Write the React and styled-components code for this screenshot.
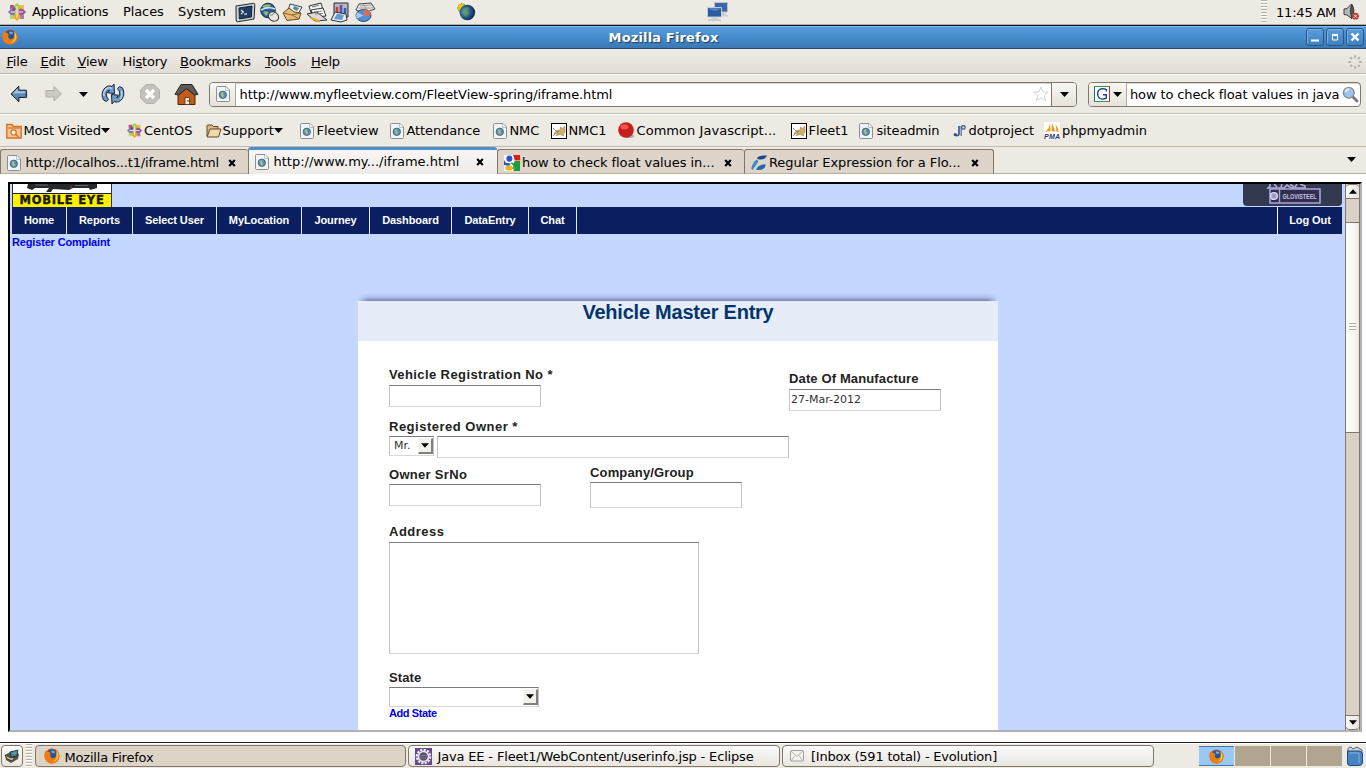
import React from "react";
import styled, { createGlobalStyle } from "styled-components";

const Global = createGlobalStyle`
  * { box-sizing: border-box; }
  body { margin: 0; background: #fff; overflow: hidden; }
`;

const Screen = styled.div`
  width: 1366px; height: 768px; display: flex; flex-direction: column;
  font: 13px/16px "DejaVu Sans", sans-serif; color: #000; background: #fff; overflow: hidden;
`;
const Space = styled.span`flex: none; width: ${p => p.$w}px;`;
const Grow = styled.span`flex: 1;`;
const Slot = styled.span`
  flex: none; width: ${p => p.$w}px; white-space: nowrap; display: block;
  letter-spacing: ${p => p.$ls || 0}px; padding-top: ${p => p.$top || 0}px;
  svg { display: block; }
`;
const TopPanel = styled.div`
  flex: none; height: 25px; display: flex; align-items: center; background: #edeae3;
  border-bottom: 1px solid #bcae96;
`;
const TitleBar = styled.div`
  flex: none; height: 24px; display: flex; align-items: center; padding: 0 2px 0 2px;
  background: linear-gradient(#5b9fe0, #4a90d0 40%, #3a78b4); border-top: 1px solid #0d1b2a; border-bottom: 1px solid #2b4d6d;
  box-shadow: inset 0 1px #7fb8ee;
`;
const TitleText = styled.div`
  flex: 1; text-align: center; color: #fff; font-weight: bold; text-shadow: 1px 1px 1px #1c3d5c;
  padding: 1px 0 0 4px; letter-spacing: .15px;
`;
const WinButton = styled.span`
  width: 18px; height: 18px; margin-left: 2px; border: 1px solid #2a5584; border-radius: 3px;
  background: linear-gradient(#5a9ddd, #3f80bf); box-shadow: inset 1px 1px #74afe6;
  display: flex; align-items: center; justify-content: center;
`;
const MenuBar = styled.div`
  flex: none; height: 26px; display: flex; align-items: center; padding-left: 6.5px;
  background: linear-gradient(#eeebe6, #e2ddd6); border-bottom: 1px solid #fff; box-shadow: inset 0 -1px #bfb8ae;
`;
const NavBar = styled.div`
  flex: none; height: 40px; display: flex; align-items: center; background: #edeae3;
  border-bottom: 1px solid #fff; box-shadow: inset 0 -1px #c6beb0; padding-bottom: 1px;
`;
const UrlBox = styled.div`
  flex: none; width: ${p => p.$w}px; height: 25px; border: 1px solid #82766a; border-radius: 4px; background: #fff;
  display: flex; align-items: center; overflow: hidden; box-shadow: inset 0 1px #d8d4ce;
`;
const BoxEnd = styled.span`
  flex: none; width: ${p => p.$w}px; height: 100%; display: flex; align-items: center; justify-content: center; gap: 3px;
  background: linear-gradient(#f8f7f4, #e6e2db);
  border-left: ${p => (p.$left ? "1px solid #82766a" : "0")};
  border-right: ${p => (p.$right ? "1px solid #b3a998" : "0")};
`;
const Bookmarks = styled.div`
  flex: none; height: 32px; display: flex; align-items: center; background: #edeae3; border-bottom: 1px solid #c3b9a9;
  padding-left: 6px;
`;
const TabStrip = styled.div`
  flex: none; height: 27px; display: flex; align-items: flex-end; background: #edeae3;
`;
const Tab = styled.div`
  flex: none; width: ${p => p.$w}px; height: ${p => (p.$active ? 27 : 25)}px; display: flex; align-items: center;
  padding: ${p => (p.$active ? 0 : 2)}px 0 0 6px;
  background: ${p => (p.$active ? "linear-gradient(#f7f6f4,#eeebe6)" : "#ddd4ca")};
  border: 1px solid #82766a; border-top: ${p => (p.$active ? "3px solid #4a90d0" : "1px solid #82766a")};
  border-bottom: ${p => (p.$active ? "0" : "1px solid #b9ad9c")};
  border-right-width: ${p => (p.$last ? 1 : 0)}px;
  border-radius: 3px 3px 0 0;
`;
const TabRest = styled.div`
  flex: 1; height: 100%; border-bottom: 1px solid #b9ad9c; display: flex; align-items: center; justify-content: flex-end; padding: 0 10px 2px 0;
`;
const FrameWrap = styled.div`flex: none; height: 568px; padding: 8px 4px 0 8px; background: #fff;`;
const Frame = styled.div`
  width: 1354px; height: 550px; border: 2px solid #b1b1b1; border-top-color: #000; border-left-color: #000;
  display: flex; background: #c4d7ff;
`;
const Page = styled.div`
  flex: 1; padding: 0 3px 0 2px; height: 100%; overflow: hidden; font-family: "Liberation Sans", Arial, sans-serif;
`;
const LogoRow = styled.div`display: flex; justify-content: space-between; height: 23px;`;
const MobileEye = styled.div`width: 100px; height: 23px; border: 1px solid #333; border-top: 0; border-bottom: 0; background: #fff;`;
const EyeBand = styled.div`
  height: 14px; background: #fff200; border-top: 1px solid #222; text-align: center;
  font: bold 11.5px/13px "DejaVu Sans", sans-serif; color: #1c1a05; letter-spacing: .75px; white-space: nowrap;
  -webkit-text-stroke: .4px #1c1a05;
`;
const Menu = styled.nav`
  height: 27px; background: #0b1f60; display: flex; color: #fff; font: bold 11px/27px "Liberation Sans", Arial, sans-serif;
`;
const MenuItem = styled.span`
  flex: none; width: ${p => p.$w}px; text-align: center; white-space: nowrap; letter-spacing: -.08px;
  border-right: ${p => (p.$end ? "0" : "1px solid #dfe8ff")}; border-left: ${p => (p.$end ? "1px solid #fff" : "0")};
`;
const Link = styled.a`
  display: block; color: #0000ee; font: bold 11px/13px "Liberation Sans", Arial, sans-serif; letter-spacing: ${p => p.$ls || 0}px;
  padding-top: ${p => p.$top || 0}px;
`;
const Card = styled.section`width: 640px; margin: 44px 0 0 346px;`;
const CardShade = styled.div`
  height: 8px; background: linear-gradient(rgba(60,80,130,0), rgba(60,80,130,.15) 50%, rgba(60,75,120,.6));
  mask-image: linear-gradient(90deg, transparent, #000 10px, #000 630px, transparent);
`;
const CardHead = styled.h1`
  margin: 0; height: 40px; background: #e6edf8; color: #03356b; text-align: center;
  font: bold 20px/23px "Liberation Sans", Arial, sans-serif; letter-spacing: -.23px;
`;
const CardBody = styled.div`background: #fff; height: 389px; padding: 25px 31px 0;`;
const FormRow = styled.div`display: flex; align-items: flex-start; height: ${p => p.$h}px;`;
const Field = styled.div`
  flex: none; display: block; width: ${p => p.$w}px; padding-top: ${p => p.$top || 0}px;
`;
const Label = styled.label`
  display: block; height: ${p => p.$h || 19}px; white-space: nowrap; color: #222; letter-spacing: ${p => p.$ls ?? 0.5}px;
  font: bold 13px/17px "Liberation Sans", Arial, sans-serif;
`;
const Input = styled.div`
  width: ${p => p.$w}px; height: ${p => p.$h || 22}px; border: 1px solid #c3c3c3; border-top-color: #7b7b7b; border-bottom-color: #d9d9d9;
  background: #fff; font: 11px/19px "DejaVu Sans", sans-serif; color: #333; padding-left: 1px;
`;
const Select = styled(Input)`
  display: flex; align-items: center; justify-content: space-between; padding: 0 0 0 4px; line-height: 20px;
`;
const SelectButton = styled.span`
  width: 15px; height: 16px; background: #f2f0ec; border: 1px solid #f6f5f2; border-right: 2px solid #85807a; border-bottom: 2px solid #85807a;
  display: flex; align-items: center; justify-content: center; padding-bottom: 1px;
`;
const Inline = styled.div`display: flex; gap: 3px;`;
const ScrollBar = styled.div`
  flex: none; width: 15px; height: 100%; background: #d9d1c6; border-left: 1px solid #82766a; border-right: 1px solid #82766a;
  display: flex; flex-direction: column; justify-content: space-between;
`;
const ScrollButton = styled.div`
  height: 15px; background: linear-gradient(90deg, #fcfcfa, #e6e2da); display: flex; align-items: center; justify-content: center;
  border: 0 solid #82766a; border-top-width: 1px; border-bottom-width: 1px; border-radius: ${p => (p.$up ? "4px 4px 0 0" : "0 0 4px 4px")};
`;
const Trough = styled.div`flex: 1; padding-top: 23px;`;
const Thumb = styled.div`
  height: 211px; background: linear-gradient(90deg, #fdfdfb, #f9f9f3 60%, #e9e6dc); border: 0 solid #82766a; border-width: 1px 0;
  display: flex; flex-direction: column; align-items: center; justify-content: center; gap: 2px; padding-bottom: 2px;
`;
const GripLine = styled.i`width: 7px; height: 1px; background: #b5aa98;`;
const TaskBar = styled.div`
  flex: none; height: 26px; border-top: 1px solid #1d2024; background: #edeae3; display: flex; align-items: center; padding: 1px 0 0 1px;
  box-shadow: inset 0 1px #fff;
`;
const Task = styled.div`
  flex: none; width: ${p => p.$w}px; height: 22px; border: 1px solid #82766a; border-radius: 4px; display: flex; align-items: center;
  background: ${p => (p.$on ? "#ddd4c8" : "linear-gradient(#fcfbfa,#e9e6e0)")}; margin-right: 2px;
  padding-left: ${p => p.$pad ?? 8}px;
`;
const Grip = styled.span`
  flex: none; width: 6px; height: ${p => p.$h}px;
  background: repeating-linear-gradient(#bdb29f 0 1px, #fff 1px 2px, #edeae3 2px 3px);
`;
const Pager = styled.div`
  display: flex; width: 143px; height: 20px; gap: 1px; background: #eee9df;
`;
const Desk = styled.span`
  flex: 1; display: flex; justify-content: center; align-items: center; background: ${p => (p.$on ? "#99c8f3" : "#b1a592")};
  border: 0 solid #3d78ad; border-width: ${p => (p.$on ? "1px 0" : "0")};
`;

/* ---------- icons ---------- */
const Tri = ({ w = 9, up }) => (
  <svg width={w} height="5" viewBox="0 0 9 5"><path d={up ? "M0 5L4.5 0L9 5z" : "M0 0h9L4.5 5z"} fill="#000" /></svg>
);
const Cross = () => (
  <svg width="8" height="8" viewBox="0 0 8 8"><path d="M1.2 1L6.8 7M6.8 1L1.2 7" stroke="#000" strokeWidth="2.1" /></svg>
);
const CentOS = ({ s = 18 }) => {
  const c = ["#a5cd39", "#94568f", "#efa724", "#7d79b0"];
  const d = ["#efa724", "#94568f", "#a5cd39", "#932279"];
  return (
    <svg width={s} height={s} viewBox="-9 -9 18 18">
      {[0, 90, 180, 270].map((a, i) => (
        <g key={a} transform={`rotate(${a})`}>
          <path d="M0-9L3.2-5.8V-3L0-.6L-3.2-3V-5.8z" fill={c[i]} />
          <path d="M2.8-7H7V-2.8L5.4-3.4L3-1L1-3L3.4-5.4z" fill={d[i]} opacity=".75" />
          <path d="M0-6V-1" stroke="#fff" strokeWidth=".9" />
        </g>
      ))}
    </svg>
  );
};
const Fox = ({ s = 16 }) => (
  <svg width={s} height={s} viewBox="0 0 16 16">
    <circle cx="8" cy="8" r="7.5" fill="#d9580f" />
    <circle cx="8.2" cy="6.6" r="5.3" fill="#24559c" />
    <path d="M7 3Q9 1.5 11.4 4Q10 6 8 5z" fill="#6ab0e8" />
    <path d="M1 3Q2 4 4 3.6Q6 4 6.8 6Q5.4 8 7 9.4Q9.6 11.2 12 8.6Q13 5 11.6 2.2Q16 5 15.4 9.4Q14 15 8.2 15.6Q2 15.4.6 9.6Q.2 6 1 3z" fill="#ef7d14" />
    <path d="M12.6 3Q15.6 7 13.6 11Q11.6 14 8 14.2Q12.6 12 12.8 8z" fill="#fbcf3a" />
  </svg>
);
const PageIcon = () => (
  <svg width="14" height="16" viewBox="0 0 14 16">
    <path d="M1.5.5H10L13.5 4V14.5Q13.5 15.5 12.5 15.5H1.5Q.5 15.5.5 14.5V1.5Q.5.5 1.5.5z" fill="#f3f5f5" stroke="#8b8f90" />
    <path d="M9.6.8V4.4H13.2" fill="#fff" stroke="#a9adad" strokeWidth=".8" />
    <circle cx="6.8" cy="8.8" r="3.7" fill="#5b8cbb" stroke="#3a6594" strokeWidth=".9" />
    <path d="M4.6 7Q6.4 5.6 7.6 6.6L6.8 8L8.2 9.6L7 11.8Q5.4 10.8 5.4 9.2z" fill="#a9c566" />
  </svg>
);
const Terminal = () => (
  <svg width="21" height="21" viewBox="0 0 21 21">
    <path d="M1 4L18.5 1.3Q20 1.2 19.8 3L19 17L2.5 19.8Q1.2 19.8 1.2 18z" fill="#d3d6d8" stroke="#222" />
    <path d="M4 6L17 4L16.4 15L4.4 17z" fill="#1d3c68" stroke="#10233d" />
    <path d="M6 8L8.4 10L6 12M9.2 12.3L12 11.9" stroke="#fff" fill="none" strokeWidth="1.1" />
  </svg>
);
const WebMouse = () => (
  <svg width="21" height="21" viewBox="0 0 21 21">
    <circle cx="9" cy="8.5" r="7.3" fill="#2a5b96" stroke="#142b45" />
    <path d="M3 4Q8 1 12 3L10 6L6 7zM4 10Q8 8 10 11L7 14z" fill="#8fb676" /><path d="M2 8Q9 4 16 7" stroke="#cfe2f1" fill="none" strokeWidth="1.6" />
    <ellipse cx="14.5" cy="14.5" rx="5.3" ry="4.5" transform="rotate(30 14.5 14.5)" fill="#e6e6e4" stroke="#333" />
    <path d="M11 13Q14 14 15 11" fill="none" stroke="#777" />
  </svg>
);
const MailIcon = () => (
  <svg width="22" height="20" viewBox="0 0 22 20">
    <path d="M8 2L20 5L15 14L6 9z" fill="#e8eef0" stroke="#444" /><path d="M12 4L17 6L15 9L11 7z" fill="#4f8fa2" />
    <path d="M1 11L7 6L12 10L19 11L17 17L5 18.5z" fill="#e4bd7c" stroke="#6b4a1d" /><path d="M1 11L10 13L17 17M10 13L19 11" fill="none" stroke="#8c6430" />
  </svg>
);
const WriterIcon = () => (
  <svg width="22" height="21" viewBox="0 0 22 21">
    <path d="M3 4L15 1L17 8L5 11z" fill="#f4f4f2" stroke="#333" /><path d="M5 8L17 6L20 14L8 15z" fill="#fff" stroke="#333" />
    <path d="M1 12L11 10L21 18L9 19z" fill="#dadada" stroke="#333" /><path d="M6 5L13 3.2M8 10L16 9M9 12L17 11.4" stroke="#777" />
    <path d="M5 16L14 19.5" stroke="#e1a52b" strokeWidth="2" />
  </svg>
);
const ImpressIcon = () => (
  <svg width="20" height="21" viewBox="0 0 20 21">
    <path d="M4 1H18V15H4z" fill="#b7b4c6" stroke="#2b2b38" /><path d="M7 5V12" stroke="#d13c2f" strokeWidth="2.5" /><path d="M11 3V12" stroke="#5f4fa0" strokeWidth="2.5" /><path d="M15 6V13" stroke="#2c64b1" strokeWidth="2.5" />
    <path d="M1 18L5 10L16 12L17 18L11 20z" fill="#e8ecee" stroke="#333" /><path d="M4 17L7 11.5L14 13L12 18z" fill="#5e9dd7" />
  </svg>
);
const CalcIcon = () => (
  <svg width="22" height="21" viewBox="0 0 22 21">
    <path d="M5 2L17 1L21 7L10 11L2 8z" fill="#e9e9e7" stroke="#444" /><path d="M6 4L18 3M5 6L19 6M9 2L14 9" stroke="#999" />
    <ellipse cx="9.5" cy="13.5" rx="7.5" ry="6" fill="#5490cf" stroke="#27486f" /><path d="M9.5 13.5L10 7.6Q16 8 17 13z" fill="#e56a49" /><path d="M9.5 13.5L3 16.5Q1 13 3.4 10.4z" fill="#a9cbec" />
  </svg>
);
const Earth = () => (
  <svg width="19" height="18" viewBox="0 0 19 18">
    <defs><radialGradient id="globe" cx=".35" cy=".45" r=".7"><stop offset="0" stopColor="#7fb0a0" /><stop offset=".4" stopColor="#2f6a86" /><stop offset=".75" stopColor="#143a72" /><stop offset="1" stopColor="#07122c" /></radialGradient></defs>
    <circle cx="5" cy="5" r="4.3" fill="#f2c80f" stroke="#9c7605" strokeWidth=".8" strokeDasharray="2 1" />
    <circle cx="10.3" cy="9.5" r="7.8" fill="url(#globe)" />
    <path d="M6 6Q9 3 12 5L11 8L12 11L9 14Q6 12 6.6 9z" fill="#5c9468" opacity=".7" />
  </svg>
);
const NetIcon = () => (
  <svg width="21" height="20" viewBox="0 0 21 20">
    <path d="M7.5.5H20.5V10H7.5z" fill="#3c66a8" stroke="#b9c2d0" /><path d="M14 11H19V13H21V14.5H14z" fill="#d0d0cc" />
    <path d="M.5 5.5H14.5V15H.5z" fill="#2f5b9f" stroke="#c3ccd8" /><path d="M1.5 7Q8 11 14 6.2H1.5z" fill="#5a86c3" />
    <path d="M5 15.5H10V17H14V19H1V17H5z" fill="#cdcdc9" />
  </svg>
);
const Speaker = () => (
  <svg width="17" height="18" viewBox="0 0 17 18">
    <path d="M1 6L4 5.5L8.5 1Q12 7 8.8 15.5L4 12L1 11.5z" fill="#b4b6b7" stroke="#3c3c3c" /><path d="M8.6 1Q13 7 8.8 15.5Q6 8 8.6 1z" fill="#55585a" stroke="#3c3c3c" />
    <circle cx="12.5" cy="13.2" r="3.4" fill="#c63b34" /><path d="M11 11.7L14 14.7M14 11.7L11 14.7" stroke="#fff" strokeWidth=".9" />
  </svg>
);
const Arrow = ({ right }) => (
  <svg width="18" height="18" viewBox="0 0 18 18">
    {right
      ? <path d="M16.5 9L9 1.5V5.5H1V12H9V16z" fill="#cbc9c5" stroke="#b0aeaa" />
      : <><path d="M2.5 10L10 2.5V6.5H17.5V13H10V17z" fill="#c8c4bd" /><path d="M1 9L8.8 1.2V5.2H16.3V12.4H8.8V16.6z" fill="#5d87b5" stroke="#13202e" /><path d="M2.6 8.6L7.8 3.4V6.2H15.3V8.2z" fill="#a5c3e0" /></>}
  </svg>
);
const Reload = () => (
  <svg width="24" height="22" viewBox="0 0 24 22">
    <g stroke="#13253c" fill="#6f9cca" strokeLinejoin="round">
      <path d="M2.5 17Q-.5 11 3 6Q6.5 1.5 11 3.5L13 1L13.5 10.5L6.5 9.8L8.4 7.4Q5.6 7 5.2 11Q5.2 14 7.5 16.5L5.5 18.5z" />
      <path d="M21.5 5Q24.5 11 21 16Q17.5 20.5 13 18.5L11 21L10.5 11.5L17.5 12.2L15.6 14.6Q18.4 15 18.8 11Q18.8 8 16.5 5.5L18.5 3.5z" />
    </g>
    <path d="M3 13Q2 9 5 6Q8 3.5 11 5.5M20.5 8Q22 13 19 16" fill="none" stroke="#c7dcf0" strokeWidth="1.2" />
  </svg>
);
const Stop = () => (
  <svg width="20" height="20" viewBox="0 0 20 20">
    <path d="M6 .5H14L19.5 6V14L14 19.5H6L.5 14V6z" fill="#c4c1bd" stroke="#b5b2ae" /><path d="M6 6L14 14M14 6L6 14" stroke="#fff" strokeWidth="3.2" />
  </svg>
);
const Home = () => (
  <svg width="25" height="23" viewBox="0 0 25 23">
    <path d="M4 10L12.5 3L21 10V21.5H4z" fill="#c25b17" stroke="#4a240b" /><path d="M11 14.5H15.5V21.5H11z" fill="#f3eee8" stroke="#5a3013" strokeWidth=".8" /><rect x="13.4" y="17" width="1.2" height="1.6" fill="#333" />
    <path d="M7 1.5H18L24 11.3L20.5 12L12.5 5.6L4.5 12L1 11.3z" fill="#5b5b5b" stroke="#222" strokeLinejoin="round" />
  </svg>
);
const Star = () => (
  <svg width="16" height="16" viewBox="0 0 16 16"><path d="M8 1L10 5.8L15.3 6.2L11.3 9.6L12.6 14.8L8 12L3.4 14.8L4.7 9.6L.7 6.2L6 5.8z" fill="#fff" stroke="#d6d3d0" /></svg>
);
const GIcon = () => (
  <svg width="16" height="16" viewBox="0 0 16 16">
    <rect width="16" height="16" fill="#fff" /><path d="M.5 0V16" stroke="#2559d0" /><path d="M0 .5H16" stroke="#32a033" /><path d="M0 15.5H16" stroke="#32a033" /><path d="M15.5 0V16" stroke="#d42121" />
    <path d="M12.4 5.4V3.6Q11 2.6 8.2 2.6Q3.8 3 3.6 8Q4 13 8.4 13.1Q11 13 12.3 12.2V8.8H9" fill="none" stroke="#1b3f9e" strokeWidth="1.4" />
  </svg>
);
const Magnifier = () => (
  <svg width="17" height="17" viewBox="0 0 17 17">
    <path d="M10.5 10.5L15 15" stroke="#777" strokeWidth="2.8" strokeLinecap="round" /><circle cx="6.8" cy="6.8" r="5.4" fill="#9cc4ec" stroke="#8c9198" strokeWidth="1.4" /><path d="M3.5 6Q4 3.5 7 3.2" stroke="#fff" fill="none" strokeWidth="1.4" />
  </svg>
);
const Throbber = () => (
  <svg width="14" height="14" viewBox="-7 -7 14 14">
    {[0, 45, 90, 135, 180, 225, 270, 315].map(a => <rect key={a} x="-1" y="-6.7" width="2" height="2.6" fill="#b5b0aa" transform={`rotate(${a})`} />)}
  </svg>
);
const VisitedIcon = () => (
  <svg width="16" height="16" viewBox="0 0 16 16">
    <path d="M.8 1.5H6L7.5 3.5H15.2V15H.8z" fill="#f6c59b" stroke="#d8721f" strokeWidth="1.4" /><path d="M2 5H14" stroke="#d8721f" strokeWidth="1.2" />
    <circle cx="7.6" cy="9.4" r="2.6" fill="#fff1e4" stroke="#d8721f" strokeWidth="1.2" /><path d="M9.5 11L12.5 14" stroke="#d8721f" strokeWidth="1.4" />
  </svg>
);
const Folder = () => (
  <svg width="16" height="14" viewBox="0 0 16 14">
    <path d="M1 12V2Q1 1 2 1H6L7.5 2.5H12V5" fill="#d9b983" stroke="#5c4a2a" /><path d="M1 13L4 5H15L12.5 13z" fill="#f0d9ab" stroke="#5c4a2a" />
  </svg>
);
const Tomcat = () => (
  <svg width="16" height="16" viewBox="0 0 16 16">
    <rect x=".5" y=".5" width="15" height="15" fill="#fff" stroke="#000" /><path d="M3 11Q6 6 9 7.4L9.6 4L11.4 5.4L14 3.4V9L12 11L13 13L9 11.4L5 12.6L7 10z" fill="#d2ae6b" stroke="#8d7340" strokeWidth=".5" /><path d="M2 5L5 8L8 8.5M2.5 13L4 10" stroke="#777" fill="none" strokeWidth=".8" />
  </svg>
);
const Ball = () => (
  <svg width="17" height="17" viewBox="0 0 17 17"><ellipse cx="11" cy="14" rx="5.5" ry="2" fill="#b4b0aa" /><circle cx="8" cy="8" r="7.8" fill="#c81d1d" /><ellipse cx="6.5" cy="4.8" rx="4" ry="2.6" fill="#ee564e" /></svg>
);
const DotP = () => (
  <svg width="13" height="14" viewBox="0 0 13 14"><path d="M6 2V9.6Q6 12 3 11.6" fill="none" stroke="#2d4f8c" strokeWidth="1.6" /><circle cx="2.2" cy="10.6" r="1.6" fill="#2d4f8c" /><path d="M8.2 12V2" stroke="#5574a8" strokeWidth="1.3" /><circle cx="10.4" cy="3.4" r="1.8" fill="none" stroke="#2d4f8c" strokeWidth="1.2" /></svg>
);
const Pma = () => (
  <svg width="16" height="17" viewBox="0 0 16 17">
    <rect width="16" height="17" fill="#fff" /><path d="M6 0Q6 6 1 10L6.5 9zM8 1L11.5 9.4L7.4 9zM11.6 2Q14 6 15 10L12.4 9.5z" fill="#f09a1a" />
    <text x="0" y="16.5" fontSize="7" fontWeight="bold" fontStyle="italic" fontFamily="Liberation Sans" fill="#33366b" textLength="16" letterSpacing="0">PMA</text>
  </svg>
);
const Google = () => (
  <svg width="16" height="16" viewBox="0 0 16 16">
    <rect width="16" height="16" fill="#fff" /><path d="M9 0H16V5.5H10.5Q10.5 2 9 0z" fill="#dd1b1b" /><path d="M11 6H16V16H9Q12 13 9.6 10Q9 8 11 6z" fill="#1e9b3b" />
    <ellipse cx="5.4" cy="3.6" rx="3" ry="3.2" fill="#2955c8" /><path d="M0 5L2 8L7 8.4L5 11L0 10z" fill="#2955c8" /><ellipse cx="5" cy="13" rx="3.8" ry="2.6" fill="#f4b31a" /><path d="M7.4 8Q12 10 9 14" fill="none" stroke="#1e9b3b" strokeWidth="1.5" />
  </svg>
);
const RegexIcon = () => (
  <svg width="16" height="16" viewBox="0 0 16 16"><path d="M6 3Q8 0 16 .5Q14 5 9 4.4Q6 4.6 6 3z" fill="#1f4690" /><path d="M6 4.6Q1 8 .4 13.6Q.6 15.6 2 14.4L7.4 6.4z" fill="#3f87cc" /><path d="M5 15Q7 9.6 14.6 9.2Q14.6 15.4 5 15z" fill="#2663ad" /></svg>
);
const Gear = () => (
  <svg width="17" height="17" viewBox="-8.5 -8.5 17 17"><rect x="-8.5" y="-8.5" width="17" height="17" fill="#66498c" /><circle r="6.6" fill="none" stroke="#efeef2" strokeWidth="2.4" strokeDasharray="2.2 1.25" /><circle r="5" fill="#5a5070" stroke="#e6e4ea" strokeWidth="1.6" /><path d="M-4-1H4M-4 1.4H4" stroke="#7d7595" /></svg>
);
const Envelope = () => (
  <svg width="14" height="12" viewBox="0 0 14 12"><rect x=".5" y=".5" width="13" height="10.5" rx="1" fill="#f4f3f1" stroke="#a19f9b" /><path d="M1 1L7 6.5L13 1M1 11L5 5.4M13 11L9 5.4" fill="none" stroke="#b5b2ae" /></svg>
);
const DesktopIcon = () => (
  <svg width="16" height="15" viewBox="0 0 16 15"><path d="M1 6L8 2L15 5L14 10L7 14L2 11z" fill="#5a5343" /><path d="M6 3L14 1L13 7L7 8z" fill="#3f7ea8" stroke="#222" strokeWidth=".7" /><path d="M8 4L12 3L11 6z" fill="#6eb36b" /><path d="M1 6L7 9L11 8L8 12L3 9.5z" fill="#d8c69b" stroke="#222" strokeWidth=".7" /></svg>
);
const Trash = () => (
  <svg width="18" height="20" viewBox="0 0 18 20"><path d="M2 6Q1 1 5 1L7 3L11 1L16 4L16 7z" fill="#c9d6e0" stroke="#53616e" /><path d="M1.5 5H14L16.5 7V17Q16 19.5 13 19.5H4Q1.5 19.5 1.5 17z" fill="#4583c3" stroke="#264d79" /><path d="M3 7H13V17" fill="none" stroke="#84b4e2" /></svg>
);
const CameraArt = () => (
  <svg width="98" height="9" viewBox="0 0 98 9"><path d="M15 0H84V4L77 6L76 4H60L56 6L40 5L38 8H33L36 4L22 4L19 6L14 4z" fill="#25282b" /><path d="M22 1H35M62 1.5H75" stroke="#60666a" /><circle cx="58" cy="3" r=".8" fill="#d33" /></svg>
);
const ClientLogo = () => (
  <svg width="99" height="22" viewBox="0 0 99 22">
    <path d="M0 0H99V18Q99 22 95 22H4Q0 22 0 18z" fill="#333950" />
    <path d="M27 0V2L25 4H41L44 1L48 4H62V2L57 0M31 0L34 3M39 0L38 3M47 0L51 3M54 0L52 3" fill="none" stroke="#b3b1dc" strokeWidth="1.6" />
    <path d="M27 5H77V19H27z" fill="#302f4e" stroke="#a9a6d6" strokeWidth="1.6" /><circle cx="31" cy="12" r="3.4" fill="#9b9ac4" stroke="#ddddf8" strokeWidth="1.4" /><path d="M36.5 5V19" stroke="#a9a6d6" strokeWidth="1.4" />
    <text x="39.5" y="14.6" fontSize="7" fontWeight="bold" fontFamily="Liberation Sans" fill="#c6c4e8" textLength="34" lengthAdjust="spacingAndGlyphs">GLOVISTEEL</text>
  </svg>
);

const menus = [["F", "ile", 34], ["E", "dit", 37], ["V", "iew", 45], ["Hi", "s", 57.5, "tory"], ["B", "ookmarks", 85], ["T", "ools", 46], ["H", "elp", 40]];
const siteMenu = [["Home", 55], ["Reports", 66], ["Select User", 84], ["MyLocation", 85], ["Journey", 68], ["Dashboard", 82], ["DataEntry", 77], ["Chat", 48]];
const bookmarks = [
  [<VisitedIcon />, 17.5, "Most Visited", 77.5, -0.15, 26], [<CentOS s={15} />, 17, "CentOS", 61.5, -0.1], [<Folder />, 17, "Support", 51.5, 0, 25.5],
  [<PageIcon />, 17, "Fleetview", 73], [<PageIcon />, 17, "Attendance", 86, -0.1], [<PageIcon />, 17, "NMC", 41, -0.1],
  [<Tomcat />, 18, "NMC1", 49, -0.1], [<Ball />, 19, "Common Javascript...", 154, 0.05], [<Tomcat />, 18, "Fleet1", 50.5, -0.1],
  [<PageIcon />, 17.5, "siteadmin", 76, -0.15], [<DotP />, 16, "dotproject", 75.5, -0.1], [<Pma />, 18, "phpmyadmin", 90, -0.1],
];
const tabs = [
  [248, <PageIcon />, "http://localhos...t1/iframe.html", false, -0.18], [249, <PageIcon />, "http://www.my.../iframe.html", true, 0],
  [247, <Google />, "how to check float values in...", false, -0.06], [250, <RegexIcon />, "Regular Expression for a Flo...", false, -0.08],
];

export default function App() {
  return (
    <Screen>
      <Global />
      <TopPanel>
        <Space $w={8} /><Slot $w={24}><CentOS /></Slot>
        <Slot $w={91} $ls={-0.27}>Applications</Slot><Slot $w={55} $ls={-0.1}>Places</Slot><Slot $w={57} $ls={-0.1}>System</Slot>
        <Slot $w={24}><Terminal /></Slot><Slot $w={23}><WebMouse /></Slot><Slot $w={24}><MailIcon /></Slot>
        <Slot $w={24}><WriterIcon /></Slot><Slot $w={24}><ImpressIcon /></Slot><Slot $w={103}><CalcIcon /></Slot>
        <Slot $w={250}><Earth /></Slot><Slot $w={30}><NetIcon /></Slot>
        <Grow /><Grip $h={24} /><Space $w={9} /><Slot $w={67} $ls={-0.2} $top={1}>11:45 AM</Slot><Slot $w={23}><Speaker /></Slot>
      </TopPanel>
      <TitleBar>
        <Slot $w={17}><Fox s={16} /></Slot>
        <TitleText>Mozilla Firefox</TitleText>
        <WinButton><svg width="10" height="10"><path d="M1 8.5H9" stroke="#fff" strokeWidth="2" /></svg></WinButton>
        <WinButton><svg width="10" height="10"><path d="M2.5 3H7.5V8H2.5z" fill="none" stroke="#fff" /><path d="M2 3H8" stroke="#fff" strokeWidth="2" /></svg></WinButton>
        <WinButton><svg width="10" height="10"><path d="M1.5 1.5L8.5 8.5M8.5 1.5L1.5 8.5" stroke="#fff" strokeWidth="2.4" /></svg></WinButton>
      </TitleBar>
      <MenuBar>
        {menus.map(([a, b, w, c]) => (
          <Slot key={a + b} $w={w} $ls={-0.2}>{c ? <>{a}<u>{b}</u>{c}</> : <><u>{a}</u>{b}</>}</Slot>
        ))}
        <Grow /><Slot $w={18}><Throbber /></Slot>
      </MenuBar>
      <NavBar>
        <Space $w={9.5} /><Slot $w={35.5}><Arrow /></Slot><Slot $w={34}><Arrow right /></Slot><Slot $w={22}><Tri /></Slot>
        <Slot $w={39}><Reload /></Slot><Slot $w={34}><Stop /></Slot><Slot $w={35}><Home /></Slot>
        <UrlBox $w={868}>
          <BoxEnd $w={26} $right><PageIcon /></BoxEnd><Space $w={3.5} /><Slot $w={500} $ls={-0.09} $top={1}>http://www.myfleetview.com/FleetView-spring/iframe.html</Slot>
          <Grow /><Slot $w={18.5}><Star /></Slot><BoxEnd $w={25} $left><Tri /></BoxEnd>
        </UrlBox>
        <Space $w={11} />
        <UrlBox $w={273}>
          <BoxEnd $w={38} $right><GIcon /><Tri /></BoxEnd><Space $w={3} /><Slot $w={212} $ls={-0.12} $top={1}>how to check float values in java</Slot><Slot $w={17}><Magnifier /></Slot>
        </UrlBox>
      </NavBar>
      <Bookmarks>
        {bookmarks.map(([icon, iw, text, tw, ls, arrow]) => (
          <React.Fragment key={text}>
            <Slot $w={iw}>{icon}</Slot><Slot $w={tw} $ls={ls}>{text}</Slot>{arrow && <Slot $w={arrow}><Tri /></Slot>}
          </React.Fragment>
        ))}
      </Bookmarks>
      <TabStrip>
        {tabs.map(([w, icon, text, active, ls], i) => (
          <Tab key={i} $w={w} $active={active} $last={i === 3}>
            <Slot $w={i > 1 ? 18 : 18.5}>{icon}</Slot><Slot $w={i > 1 ? 202 : 202.5} $ls={ls}>{text}</Slot><Slot $w={8}><Cross /></Slot>
          </Tab>
        ))}
        <TabRest><Tri /></TabRest>
      </TabStrip>
      <FrameWrap>
        <Frame>
          <Page>
            <LogoRow>
              <MobileEye><Slot $w={98}><CameraArt /></Slot><EyeBand>MOBILE EYE</EyeBand></MobileEye>
              <ClientLogo />
            </LogoRow>
            <Menu>
              {siteMenu.map(([t, w]) => <MenuItem key={t} $w={w}>{t}</MenuItem>)}
              <Grow /><MenuItem $w={65} $end>Log Out</MenuItem>
            </Menu>
            <Link $ls={-0.16} $top={2}>Register Complaint</Link>
            <Card>
              <CardShade />
              <CardHead>Vehicle Master Entry</CardHead>
              <CardBody>
                <FormRow $h={52}>
                  <Field $w={400}><Label $ls={0.4}>Vehicle Registration No *</Label><Input $w={152} /></Field>
                  <Field $w={152} $top={4}><Label $ls={0.13}>Date Of Manufacture</Label><Input $w={152}>27-Mar-2012</Input></Field>
                </FormRow>
                <FormRow $h={46}>
                  <Field $w={400}>
                    <Label $h={18}>Registered Owner *</Label>
                    <Inline><Select $w={45} $h={20}>Mr.<SelectButton><Tri w={8} /></SelectButton></Select><Input $w={352} /></Inline>
                  </Field>
                </FormRow>
                <FormRow $h={59}>
                  <Field $w={201} $top={2}><Label $h={18} $ls={0.3}>Owner SrNo</Label><Input $w={152} /></Field>
                  <Field $w={152}><Label $h={18} $ls={0.15}>Company/Group</Label><Input $w={152} $h={26} /></Field>
                </FormRow>
                <FormRow $h={146}>
                  <Field $w={310}><Label>Address</Label><Input $w={310} $h={112} /></Field>
                </FormRow>
                <FormRow $h={60}>
                  <Field $w={150}>
                    <Label $h={18} $ls={0.1}>State</Label><Select $w={150} $h={20}><span /><SelectButton><Tri w={8} /></SelectButton></Select>
                    <Link $ls={-0.4}>Add State</Link>
                  </Field>
                </FormRow>
              </CardBody>
            </Card>
          </Page>
          <ScrollBar>
            <ScrollButton $up><Tri w={8} up /></ScrollButton>
            <Trough><Thumb><GripLine /><GripLine /><GripLine /></Thumb></Trough>
            <ScrollButton><Tri w={8} /></ScrollButton>
          </ScrollBar>
        </Frame>
      </FrameWrap>
      <TaskBar>
        <Task $w={22} $pad={2}><DesktopIcon /></Task><Space $w={1} /><Grip $h={24} /><Space $w={3} />
        <Task $w={371} $on><Slot $w={20.5}><Fox s={16} /></Slot><Slot $w={200} $ls={-0.2} $top={3}>Mozilla Firefox</Slot></Task>
        <Task $w={372} $pad={6}><Slot $w={22.5}><Gear /></Slot><Slot $w={330} $ls={-0.16} $top={1}>Java EE - Fleet1/WebContent/userinfo.jsp - Eclipse</Slot></Task>
        <Task $w={372} $pad={7}><Slot $w={21}><Envelope /></Slot><Slot $w={300} $ls={-0.2} $top={1}>[Inbox (591 total) - Evolution]</Slot></Task>
        <Grow />
        <Pager><Desk $on><Fox s={15} /></Desk><Desk /><Desk /><Desk /></Pager>
        <Space $w={4} /><Trash /><Space $w={2} />
      </TaskBar>
    </Screen>
  );
}
